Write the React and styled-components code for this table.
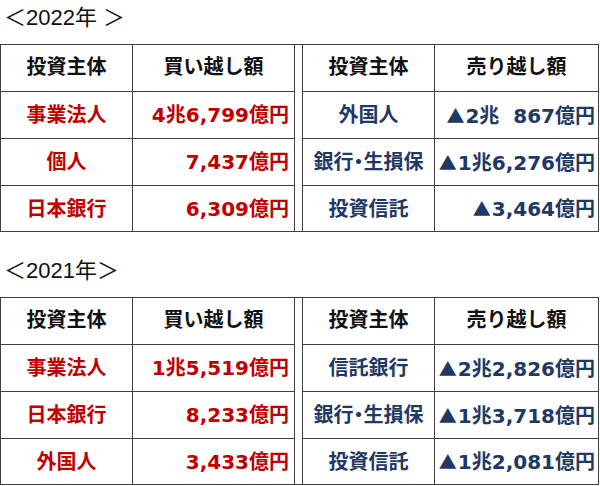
import React from 'react';
import styled, {createGlobalStyle} from 'styled-components';

const RED = '#c00000';
const NAVY = '#1f3864';
const LINE = '#404040';

const years = [
    {
        title: '＜2022年 ＞',
        buy: [
            ['事業法人', '4兆6,799億円'],
            ['個人', '7,437億円'],
            ['日本銀行', '6,309億円'],
        ],
        sell: [
            ['外国人', '2兆\u2007867億円'],
            ['銀行・生損保', '1兆6,276億円'],
            ['投資信託', '3,464億円'],
        ],
    },
    {
        title: '＜2021年＞',
        buy: [
            ['事業法人', '1兆5,519億円'],
            ['日本銀行', '8,233億円'],
            ['外国人', '3,433億円'],
        ],
        sell: [
            ['信託銀行', '2兆2,826億円'],
            ['銀行・生損保', '1兆3,718億円'],
            ['投資信託', '1兆2,081億円'],
        ],
    },
];

function YearTable({year}) {
    return (
        <Section>
            <Heading>{year.title}</Heading>
            <Grid>
                <HeadCell>投資主体</HeadCell>
                <HeadCell>買い越し額</HeadCell>
                <Gap/>
                <HeadCell>投資主体</HeadCell>
                <HeadCell>売り越し額</HeadCell>
                {year.buy.map((b, i) => (
                    <React.Fragment key={i}>
                        <NameCell $tone={RED}>{b[0]}</NameCell>
                        <AmountCell $tone={RED} $pad={5}>
                            <span>{b[1]}</span>
                        </AmountCell>
                        <NameCell $tone={NAVY}>{year.sell[i][0]}</NameCell>
                        <AmountCell $tone={NAVY} $pad={3}>
                            <span><Minus>▲</Minus>{year.sell[i][1]}</span>
                        </AmountCell>
                    </React.Fragment>
                ))}
            </Grid>
        </Section>
    );
}

export default function App() {
    return (
        <>
            <GlobalStyle/>
            <Page>
                {years.map((y) => (
                    <YearTable key={y.title} year={y}/>
                ))}
            </Page>
        </>
    );
}

const GlobalStyle = createGlobalStyle`
    body {
        margin: 0;
        background: #ffffff;
    }
`;

const Page = styled.div`
    width: 600px;
    display: flex;
    flex-direction: column;
    gap: 21px;
`;

const Section = styled.div`
    display: flex;
    flex-direction: column;
`;

const Heading = styled.div`
    font-family: "Liberation Sans", "Noto Sans CJK JP", sans-serif;
    font-size: 22px;
    line-height: 24px;
    color: #111;
    padding: 6px 0 14px 4px;
    white-space: pre;
`;

const Grid = styled.div`
    display: grid;
    grid-template-columns: 132px 162px 8px 132px 164px;
    grid-template-rows: 47px 47px 47px 46px;
    width: 599px;
    border-top: 1px solid ${LINE};
    border-left: 1px solid ${LINE};
    box-sizing: border-box;
    font-family: "DejaVu Sans", "Noto Sans CJK JP", sans-serif;
    font-weight: 700;
    font-size: 20px;
`;

const Cell = styled.div`
    box-sizing: border-box;
    border-right: 1px solid ${LINE};
    border-bottom: 1px solid ${LINE};
    display: flex;
    align-items: center;
    white-space: pre;
    line-height: 24px;
`;

const HeadCell = styled(Cell)`
    justify-content: center;
    color: #111;
    padding-bottom: 3px;
`;

const NameCell = styled(Cell)`
    justify-content: center;
    font-feature-settings: "palt";
    color: ${(p) => p.$tone};
`;

const AmountCell = styled(Cell)`
    justify-content: flex-end;
    padding-right: ${(p) => p.$pad}px;
    color: ${(p) => p.$tone};
`;

const Minus = styled.span`
    font-family: "Noto Sans CJK JP", sans-serif;
    font-size: 18px;
    margin-right: 1px;
`;

const Gap = styled(Cell)`
    grid-column: 3;
    grid-row: 1 / span 4;
`;
